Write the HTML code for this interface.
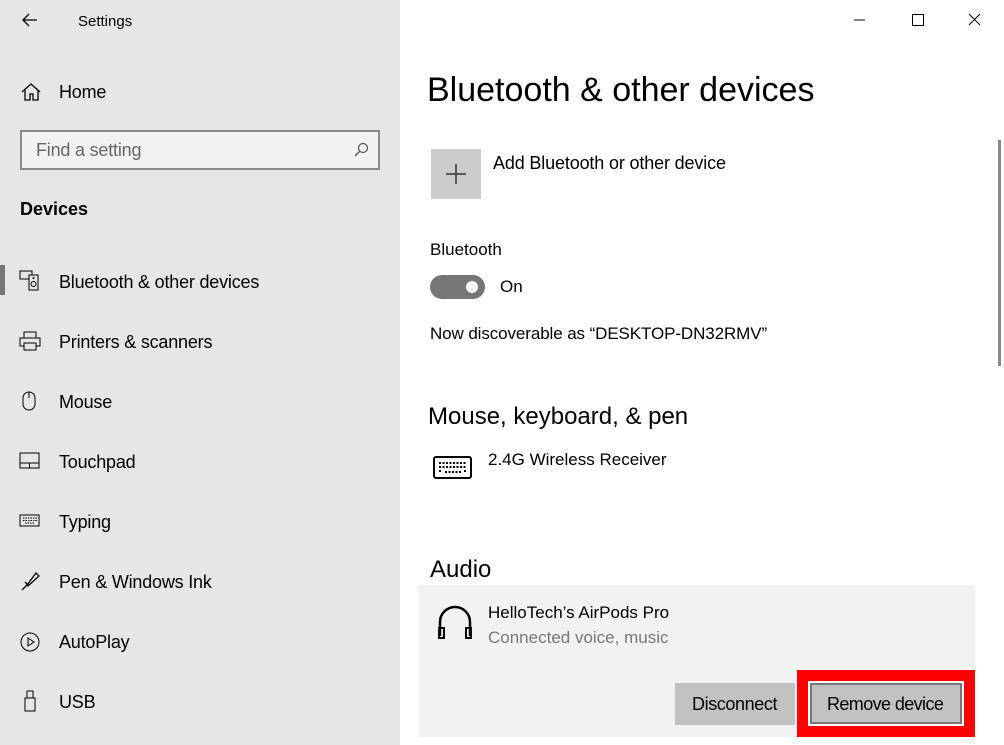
<!DOCTYPE html>
<html><head><style>
*{margin:0;padding:0;box-sizing:border-box}
body{width:1004px;height:745px;overflow:hidden;font-family:"Liberation Sans",sans-serif;background:#fff;position:relative;color:#000}
.side{position:absolute;left:0;top:0;width:400px;height:745px;background:#e6e6e6}
.a{position:absolute;white-space:nowrap}
.nav{font-size:18px;letter-spacing:-0.2px}
svg{position:absolute}
</style></head><body>
<div class="side">
<svg style="left:20px;top:11px" width="20" height="18" viewBox="0 0 20 18"><path d="M17 9H3M9 3L3 9l6 6" stroke="#000" stroke-width="1.3" fill="none"/></svg>
<div class="a" style="left:78px;top:13px;font-size:15px">Settings</div>
<svg style="left:20px;top:81px" width="22" height="22" viewBox="0 0 22 22"><path d="M2 11L11 3l9 8M5 9v10h5v-6h3v6h5V9" stroke="#000" stroke-width="1.3" fill="none"/></svg>
<div class="a nav" style="left:59px;top:82px">Home</div>
<div class="a" style="left:20px;top:130px;width:360px;height:40px;border:2px solid #8a8a8a;background:#f2f2f2"></div>
<div class="a" style="left:36px;top:140px;font-size:18px;color:#666;letter-spacing:-0.2px">Find a setting</div>
<svg style="left:352px;top:141px" width="18" height="18" viewBox="0 0 18 18"><circle cx="11" cy="7" r="4.5" stroke="#555" stroke-width="1.2" fill="none"/><path d="M8 10L3 15" stroke="#555" stroke-width="1.3"/></svg>
<div class="a" style="left:20px;top:199px;font-size:18px;font-weight:bold">Devices</div>
<div class="a" style="left:0;top:265px;width:5px;height:30px;background:#767676"></div>
<svg style="left:19px;top:270px" width="22" height="22" viewBox="0 0 22 22"><rect x="1" y="1" width="12" height="8" stroke="#000" fill="none"/><rect x="10" y="5" width="9" height="15" stroke="#000" fill="#e6e6e6"/><circle cx="14.5" cy="14" r="2.5" stroke="#000" fill="none"/><circle cx="14.5" cy="8" r="1" fill="#000"/></svg>
<div class="a nav" style="left:59px;top:272px">Bluetooth &amp; other devices</div>
<svg style="left:19px;top:330px" width="22" height="22" viewBox="0 0 22 22"><rect x="5" y="2" width="12" height="6" stroke="#000" fill="none"/><rect x="1" y="8" width="20" height="8" stroke="#000" fill="none"/><rect x="5" y="13" width="12" height="7" stroke="#000" fill="#e6e6e6"/></svg>
<div class="a nav" style="left:59px;top:332px">Printers &amp; scanners</div>
<svg style="left:20px;top:390px" width="20" height="22" viewBox="0 0 20 22"><rect x="3" y="2" width="12" height="18" rx="6" stroke="#000" fill="none"/><path d="M9 2v6" stroke="#000"/></svg>
<div class="a nav" style="left:59px;top:392px">Mouse</div>
<svg style="left:19px;top:451px" width="22" height="20" viewBox="0 0 22 20"><rect x="1" y="2" width="19" height="15" stroke="#000" fill="none"/><path d="M1 12h19M10.5 12v5" stroke="#000"/></svg>
<div class="a nav" style="left:59px;top:452px">Touchpad</div>
<svg style="left:19px;top:512px" width="22" height="18" viewBox="0 0 22 18"><rect x="1" y="3" width="19" height="11" stroke="#000" fill="none"/><path d="M4 6h14M4 8.5h14M6 11h10" stroke="#000" stroke-dasharray="1.5 1"/></svg>
<div class="a nav" style="left:59px;top:512px">Typing</div>
<svg style="left:19px;top:570px" width="22" height="22" viewBox="0 0 22 22"><path d="M3 20L8 15M8 15l9-12 3 3-11 10zM6 12l4 4" stroke="#000" fill="none" stroke-width="1.3"/></svg>
<div class="a nav" style="left:59px;top:572px">Pen &amp; Windows Ink</div>
<svg style="left:19px;top:631px" width="22" height="22" viewBox="0 0 22 22"><circle cx="11" cy="11" r="9" stroke="#000" fill="none"/><path d="M9 7l6 4-6 4z" stroke="#000" fill="none"/></svg>
<div class="a nav" style="left:59px;top:632px">AutoPlay</div>
<svg style="left:22px;top:690px" width="16" height="22" viewBox="0 0 16 22"><rect x="3" y="8" width="10" height="13" stroke="#000" fill="none"/><rect x="5" y="1" width="6" height="7" stroke="#000" fill="none"/></svg>
<div class="a nav" style="left:59px;top:692px">USB</div>
</div>
<svg style="left:850px;top:12px" width="140" height="16" viewBox="0 0 140 16"><path d="M4 8h11" stroke="#000"/><rect x="62.5" y="2.5" width="11" height="11" stroke="#000" fill="none"/><path d="M119 2l11 11M130 2l-11 11" stroke="#000"/></svg>
<div class="a" style="left:998px;top:140px;width:3px;height:226px;background:#888"></div>
<div class="a" style="left:427px;top:71px;font-size:34px">Bluetooth &amp; other devices</div>
<div class="a" style="left:431px;top:149px;width:50px;height:50px;background:#ccc"></div>
<svg style="left:445px;top:163px" width="22" height="22"><path d="M11 1v20M1 11h20" stroke="#333" stroke-width="1.5"/></svg>
<div class="a" style="left:493px;top:153px;font-size:18px;letter-spacing:-0.15px">Add Bluetooth or other device</div>
<div class="a" style="left:430px;top:240px;font-size:17px">Bluetooth</div>
<div class="a" style="left:430px;top:275px;width:55px;height:24px;border-radius:12px;background:#767676"></div>
<div class="a" style="left:466px;top:281px;width:12px;height:12px;border-radius:6px;background:#fff"></div>
<div class="a" style="left:500px;top:277px;font-size:17px">On</div>
<div class="a" style="left:430px;top:324px;font-size:17px;letter-spacing:-0.1px">Now discoverable as “DESKTOP-DN32RMV”</div>
<div class="a" style="left:428px;top:403px;font-size:24px">Mouse, keyboard, &amp; pen</div>
<svg style="left:432px;top:454px" width="42" height="28" viewBox="0 0 42 28"><rect x="2" y="3" width="37" height="21" rx="2" stroke="#000" stroke-width="2" fill="none"/><path d="M7 9h27M7 13h27M7 17h3M13 18h16M32 17h3" stroke="#000" stroke-width="2" stroke-dasharray="2 1.5"/></svg>
<div class="a" style="left:488px;top:450px;font-size:17px">2.4G Wireless Receiver</div>
<div class="a" style="left:430px;top:556px;font-size:24px">Audio</div>
<div class="a" style="left:418px;top:585px;width:557px;height:152px;background:#f2f2f2"></div>
<svg style="left:437px;top:604px" width="36" height="36" viewBox="0 0 36 36"><path d="M3 32V18a15 15 0 0 1 30 0v14" stroke="#000" stroke-width="2.5" fill="none"/><rect x="2" y="24" width="5" height="10" stroke="#000" stroke-width="2" fill="none"/><rect x="29" y="24" width="5" height="10" stroke="#000" stroke-width="2" fill="none"/></svg>
<div class="a" style="left:488px;top:603px;font-size:17px">HelloTech’s AirPods Pro</div>
<div class="a" style="left:488px;top:628px;font-size:17px;color:#777">Connected voice, music</div>
<div class="a" style="left:675px;top:683px;width:120px;height:42px;background:#c2c2c2"></div>
<div class="a" style="left:692px;top:694px;font-size:18px;letter-spacing:-0.4px">Disconnect</div>
<div class="a" style="left:797px;top:670px;width:178px;height:67px;background:#f00"></div>
<div class="a" style="left:808px;top:681px;width:156px;height:45px;border:2px solid #fff;background:#c2c2c2;box-shadow:inset 0 0 0 2px #777"></div>
<div class="a" style="left:827px;top:694px;font-size:18px;letter-spacing:-0.6px">Remove device</div>
</body></html>
